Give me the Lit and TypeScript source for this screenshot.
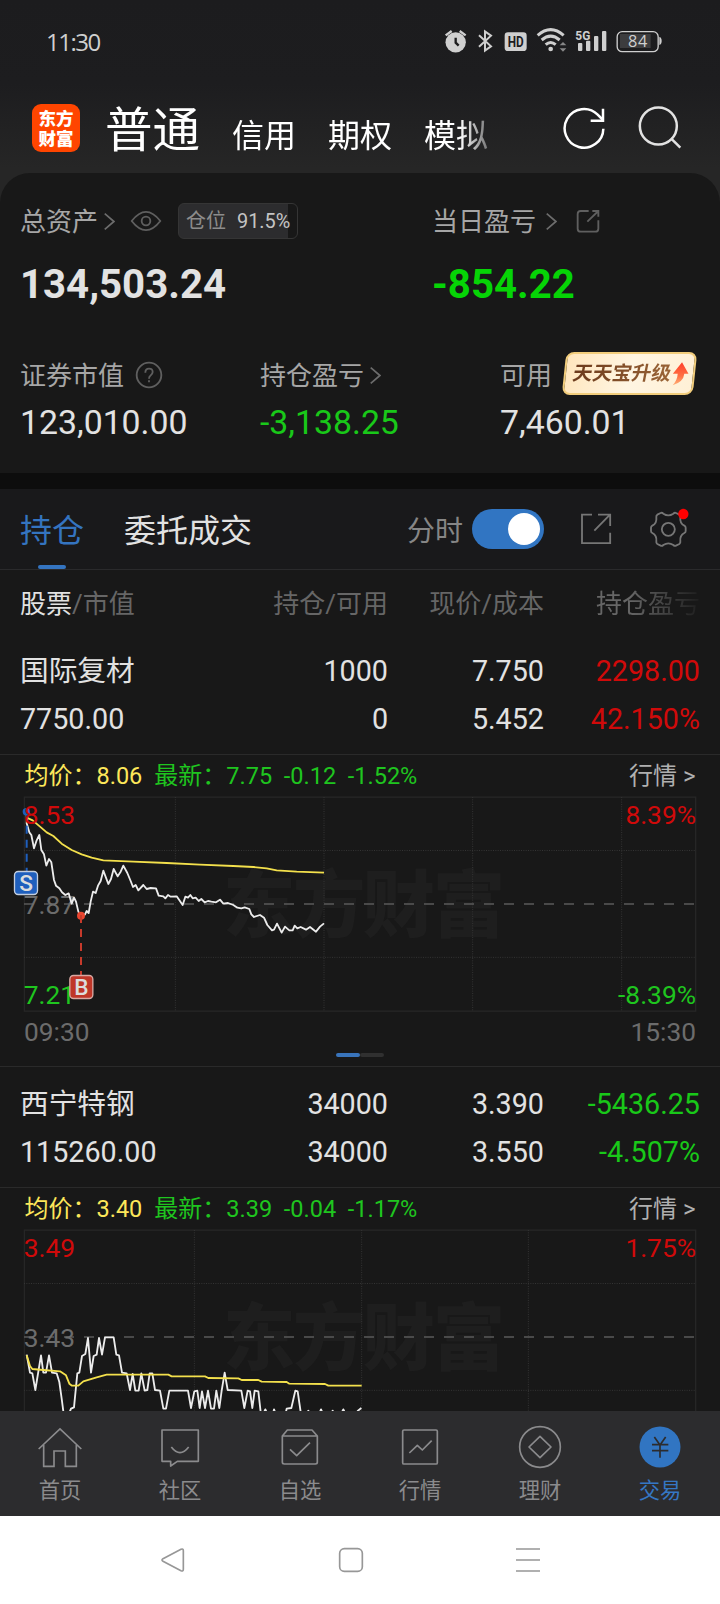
import { LitElement, html, svg, css } from "lit";
import { customElement, property } from "lit/decorators.js";

type Tone = "up" | "down";

interface ChartData {
  avg: string;
  last: string;
  high: string;
  mid: string;
  low?: string;
  pctHigh: string;
  pctLow?: string;
  columns: number[];
  price: string;
  average: string;
  trades: boolean;
}

interface Holding {
  name: string;
  value: string;
  held: string;
  available: string;
  price: string;
  cost: string;
  profit: string;
  ratio: string;
  tone: Tone;
  chart: ChartData;
}

const HOLDINGS: Holding[] = [
  {
    name: "国际复材",
    value: "7750.00",
    held: "1000",
    available: "0",
    price: "7.750",
    cost: "5.452",
    profit: "2298.00",
    ratio: "42.150%",
    tone: "up",
    chart: {
      avg: "8.06",
      last: "7.75  -0.12  -1.52%",
      high: "8.53",
      mid: "7.87",
      low: "7.21",
      pctHigh: "8.39%",
      pctLow: "-8.39%",
      columns: [526, 972, 1418, 1865],
      price:
        "80,170 80,205 88,232 94,240 102,280 110,256 118,240 124,285 132,298 139,332 147,312 154,322 162,375 168,392 178,400 186,412 196,420 206,415 215,446 222,428 228,440 235,470 243,485 255,478 260,468 266,474 272,440 279,410 287,414 294,392 302,378 310,347 325,387 333,372 341,342 353,364 362,350 370,332 382,354 392,378 399,396 407,390 415,406 430,390 440,402 452,399 468,400 476,422 490,424 496,430 504,420 512,425 530,424 548,450 556,425 564,428 571,420 578,430 587,428 596,438 604,432 614,442 624,438 634,440 648,442 660,434 670,446 684,444 700,450 712,458 724,460 734,457 748,462 754,478 762,486 780,480 792,488 802,510 816,526 822,524 831,506 845,533 855,515 868,526 878,526 884,512 892,520 902,516 918,524 930,516 948,530 960,515 972,505",
      average:
        "80,188 98,196 120,215 140,232 160,243 185,266 215,285 245,298 275,308 310,316 400,320 500,324 600,329 700,333 760,336 800,340 830,346 890,350 972,353",
      trades: true,
    },
  },
  {
    name: "西宁特钢",
    value: "115260.00",
    held: "34000",
    available: "34000",
    price: "3.390",
    cost: "3.550",
    profit: "-5436.25",
    ratio: "-4.507%",
    tone: "down",
    chart: {
      avg: "3.40",
      last: "3.39  -0.04  -1.17%",
      high: "3.49",
      mid: "3.43",
      pctHigh: "1.75%",
      columns: [583, 1085, 1585],
      price:
        "80,500 90,554 97,556 106,606 123,502 130,554 138,554 147,502 156,554 170,556 178,582 185,632 190,670 205,682 213,662 222,658 232,556 238,554 246,504 256,498 264,450 273,554 281,504 290,500 297,450 306,500 315,448 341,448 349,500 357,502 366,554 380,556 390,606 398,558 406,608 416,608 424,556 434,608 442,606 449,556 457,556 465,606 480,608 490,662 498,662 508,608 564,608 573,660 583,610 592,608 599,660 606,610 615,660 624,608 633,662 642,662 649,608 658,660 665,608 674,554 683,606 724,608 733,660 743,608 750,610 757,660 764,608 775,610 782,672 788,682 796,664 804,682 818,682 822,664 829,682 856,680 860,662 874,660 886,608 893,610 902,672 915,684 925,668 935,684 955,684 963,664 972,684 990,684 998,668 1008,684 1020,684 1030,664 1040,684 1062,684 1074,668 1084,660",
      average:
        "80,502 90,534 97,543 130,546 180,550 198,562 208,587 216,593 235,593 250,580 290,568 320,560 505,560 515,565 615,565 625,570 715,571 725,576 775,576 785,581 860,582 868,587 975,588 985,593 1085,593",
      trades: false,
    },
  },
];

const chevron = html`<svg class="chev" viewBox="0 0 32 50" width="11" height="17">
  <path d="M2 2 L29 25 L2 48" fill="none" stroke="#6c6c6c" stroke-width="5" />
</svg>`;

@customElement("minute-chart")
export class MinuteChart extends LitElement {
  @property({ attribute: false }) data!: ChartData;

  static styles = css`
    :host {
      display: block;
    }
    .legend {
      display: flex;
      height: 41px;
      padding: 0 24.500px 0 24.500px;
      line-height: 42px;
      font-size: 24px;
      white-space: pre;
    }
    .num {
      font-size: 23.500px;
    }
    .avg {
      color: #fde75a;
      margin-right: 12px;
    }
    .last {
      color: #1fc51f;
      flex: 1;
    }
    .more {
      color: #b0b0b0;
    }
    svg {
      display: block;
      overflow: visible;
    }
    text {
      font-family: Roboto, "Noto Sans CJK SC", sans-serif;
      font-size: 79px;
    }
    .mark {
      font-family: "Noto Sans CJK SC", sans-serif;
      font-size: 217px;
      font-weight: 900;
      fill: #1e1e1e;
    }
    .tag {
      font-size: 68px;
      font-weight: 500;
      fill: #dcdcdc;
      text-anchor: middle;
    }
    .end {
      text-anchor: end;
    }
    .high {
      fill: #d00a0a;
    }
    .mid {
      fill: #6c6c6c;
    }
    .low {
      fill: #1fc51f;
    }
  `;

  render() {
    const d = this.data;
    return html`
      <div class="legend"><span class="avg">均价：<span class="num">${d.avg}</span></span><span class="last">最新：<span class="num">${d.last}</span></span><span class="more">行情 &gt;</span></div>
      <svg width="720" height="215" viewBox="0 123 2160 645">
        <text class="mark" x="1092" y="529" text-anchor="middle" textLength="846">东方财富</text>
        <rect x="73" y="126.500" width="2014" height="642" fill="none" stroke="#262626" stroke-width="4" />
        <g stroke="#343434" stroke-width="3" stroke-dasharray="3 4">
          <path d="M72 286.500H2087M72 607H2087" />
          ${d.columns.map((x) => svg`<path d="M${x} 126V768" />`)}
        </g>
        <path d="M72 447H2087" stroke="#5a5a5a" stroke-width="5" stroke-dasharray="30 30" />
        <text class="mid" x="71" y="476">${d.mid}</text>
        ${d.low
          ? svg`<text class="low" x="71" y="746">${d.low}</text>
            <text class="low end" x="2088" y="746">${d.pctLow}</text>`
          : null}
        <polyline points=${d.price} fill="none" stroke="#ececec" stroke-width="5.500" stroke-linejoin="round" />
        <polyline points=${d.average} fill="none" stroke="#f3e04c" stroke-width="5.500" stroke-linejoin="round" />
        ${d.trades
          ? svg`
            <circle cx="79" cy="170" r="11" fill="#1f5fbd" />
            <path d="M80 170V348" stroke="#1f5fbd" stroke-width="6" stroke-dasharray="24 18" />
            <rect x="43.500" y="349.500" width="69" height="69" rx="11" fill="#1f5fbd" stroke="#c4cede" stroke-width="4" />
            <text class="tag" x="78" y="408">S</text>
            <circle cx="243" cy="482" r="12" fill="#e8452f" />
            <path d="M243 480V660" stroke="#c73a2b" stroke-width="6" stroke-dasharray="24 18" />
            <rect x="209.500" y="661.500" width="69" height="69" rx="11" fill="#bf3628" stroke="#d8a8a2" stroke-width="4" />
            <text class="tag" x="244" y="720">B</text>`
          : null}
        <text class="high" x="71" y="207">${d.high}</text>
        <text class="high end" x="2088" y="207">${d.pctHigh}</text>
      </svg>
    `;
  }
}

@customElement("app-root")
export class AppRoot extends LitElement {
  static styles = css`
    :host {
      display: flex;
      flex-direction: column;
      width: 720px;
      height: 1604px;
      overflow: hidden;
      background: #181818;
      color: #e2e2e2;
      font-family: Roboto, "Noto Sans CJK SC", sans-serif;
    }
    * {
      box-sizing: border-box;
    }
    svg {
      display: block;
      flex: none;
    }
    .head {
      flex: none;
      background: linear-gradient(#1c1c1e 0, #1d1d1f 84px, #262626 168px);
    }
    .status {
      display: flex;
      align-items: center;
      height: 83px;
      padding: 0 57px 0 46px;
      color: #cfcfcf;
    }
    .clock {
      flex: 1;
      padding-bottom: 1px;
      font-family: "Open Sans", Roboto, sans-serif;
      font-size: 24px;
      font-weight: 500;
      letter-spacing: -1.500px;
    }
    .nav {
      display: flex;
      align-items: center;
      height: 90px;
      padding: 0 35px 0 32px;
    }
    .logo {
      display: grid;
      place-content: center;
      width: 48px;
      height: 48px;
      border-radius: 9px;
      background: #ff4500;
      color: #fff;
      font: 900 17.500px/20px "Noto Sans CJK SC", sans-serif;
      text-align: center;
    }
    .accounts {
      display: flex;
      align-items: baseline;
      gap: 32px;
      width: 410px;
      height: 90px;
      margin-left: 25px;
      padding-top: 3px;
      color: #fff;
      font-size: 32px;
      line-height: 90px;
      white-space: nowrap;
      -webkit-mask-image: linear-gradient(90deg, #000 355px, transparent 400px);
      mask-image: linear-gradient(90deg, #000 355px, transparent 400px);
    }
    .current {
      font-size: 47.500px;
    }
    .refresh {
      margin-left: 48px;
    }
    .search {
      margin-left: 33px;
    }
    .corner {
      flex: none;
      background: #262626;
    }
    .summary {
      height: 300px;
      padding: 24px 0 0 20px;
      border-radius: 30px 30px 0 0;
      background: #181818;
    }
    .totals {
      display: grid;
      grid-template-columns: 412px 1fr;
    }
    .parts {
      display: grid;
      grid-template-columns: 240px 240px 1fr;
      margin-top: 42px;
    }
    .label {
      display: flex;
      align-items: center;
      height: 48px;
      color: #a6a6a6;
      font-size: 26px;
      line-height: 30px;
      white-space: nowrap;
    }
    .caption {
      padding-top: 2px;
    }
    .chev {
      margin-left: 6px;
    }
    .wide .chev {
      margin-left: 10px;
    }
    .total {
      height: 48px;
      margin-top: 16px;
      font-size: 40.200px;
      font-weight: 700;
      line-height: 48px;
    }
    .amount {
      height: 46px;
      font-size: 33.800px;
      line-height: 48px;
    }
    .down {
      color: #19c819;
    }
    .up {
      color: #d00a0a;
    }
    .bright {
      color: #06d406;
    }
    .eye {
      margin-left: 15px;
    }
    .share {
      margin-left: 19px;
    }
    .help {
      margin-left: 11px;
    }
    .position {
      display: flex;
      align-items: center;
      gap: 11px;
      width: 120px;
      height: 36px;
      margin-left: 16px;
      padding-left: 7px;
      border: 1px solid #353535;
      border-radius: 6px;
      background: linear-gradient(90deg, #2c2c2e 92.500%, transparent 92.500%);
      color: #8c8c8c;
      font-size: 20px;
    }
    .ratio {
      padding-top: 1px;
      color: #c4c4c4;
      font-size: 19.900px;
    }
    .promo {
      display: flex;
      align-items: center;
      width: 131px;
      height: 43px;
      margin: 0 0 3px 12px;
      padding-left: 7px;
      border: 2px solid #f2cd7c;
      border-radius: 8px;
      background: linear-gradient(100deg, #ffe6bd, #fff5e2 50%, #fff0d6);
      transform: skewX(-6deg);
    }
    .promotext {
      background: linear-gradient(90deg, #6b3a1c, #9a6436);
      -webkit-background-clip: text;
      background-clip: text;
      color: transparent;
      font-size: 19.600px;
      font-weight: 700;
      transform: skewX(-5deg);
    }
    .gap {
      flex: none;
      height: 16px;
      background: #0d0d0d;
    }
    .tabs {
      display: flex;
      flex: none;
      align-items: center;
      height: 81px;
      padding-left: 20px;
      border-bottom: 1px solid #2a2a2c;
      background: #19191b;
      font-size: 32px;
    }
    .tab {
      height: 80px;
      line-height: 84px;
      margin-right: 40px;
    }
    .active {
      display: flex;
      flex-direction: column;
      align-items: center;
      color: #3474c0;
    }
    .active::after {
      content: "";
      flex: none;
      width: 28px;
      height: 4px;
      margin-top: -8px;
      border-radius: 2px;
      background: #3474c0;
    }
    .mode {
      margin-left: 115px;
      color: #868686;
      font-size: 28px;
    }
    .switch {
      display: flex;
      justify-content: flex-end;
      width: 72px;
      height: 40px;
      margin-left: 9px;
      padding: 4px;
      border-radius: 20px;
      background: #3175c2;
    }
    .knob {
      width: 32px;
      height: 32px;
      border-radius: 50%;
      background: #fff;
    }
    .export {
      margin-left: 36px;
    }
    .gear {
      margin-left: 37px;
    }
    .columns,
    .holding {
      display: grid;
      grid-template-columns: 268px 100px 156px 156px;
      padding-left: 20px;
      text-align: right;
    }
    .columns {
      flex: none;
      height: 64px;
      color: #666;
      font-size: 26px;
      line-height: 68px;
    }
    .first {
      text-align: left;
    }
    .second {
      margin-left: -60px;
    }
    .strong {
      color: #e2e2e2;
    }
    .fade {
      -webkit-mask-image: linear-gradient(90deg, #000 55%, transparent 104%);
      mask-image: linear-gradient(90deg, #000 55%, transparent 104%);
    }
    .list {
      flex: 1;
      min-height: 0;
      overflow: hidden;
    }
    .holding {
      height: 121px;
      padding-top: 13px;
      border-bottom: 1px solid #2a2a2a;
      font-size: 28.700px;
      line-height: 48px;
      grid-auto-rows: 48px;
    }
    .axis {
      display: flex;
      justify-content: space-between;
      height: 40px;
      padding: 0 24px;
      color: #6c6c6c;
      font-size: 26.300px;
      line-height: 42px;
    }
    .pager {
      display: flex;
      justify-content: center;
      height: 16px;
      padding-top: 2px;
      border-bottom: 1px solid #2a2a2a;
    }
    .dot {
      width: 24px;
      height: 4px;
      border-radius: 2px;
      background: #303030;
    }
    .on {
      background: #3974bb;
    }
    .bar {
      display: grid;
      flex: none;
      grid-template-columns: repeat(6, 120px);
      height: 105px;
      padding-top: 12px;
      background: #2c2c2e;
      color: #8b8b8d;
      font-size: 21.300px;
      line-height: 40px;
      text-align: center;
    }
    .bar svg {
      margin: 0 auto;
    }
    .chosen {
      color: #3577c4;
    }
    .system {
      display: flex;
      flex: none;
      align-items: center;
      gap: 151.500px;
      height: 88px;
      padding-left: 160px;
      background: #fff;
    }
  `;

  private statusIcons() {
    return html`<svg width="220" height="28" viewBox="250 84 660 84">
      <g fill="#cfcfcf">
        <circle cx="288" cy="127" r="30.500" />
        <path d="M258 106L276 93M318 106L300 93" stroke="#cfcfcf" stroke-width="7" />
        <path d="M288 113V128L297 137" fill="none" stroke="#1c1c1e" stroke-width="7" />
        <path d="M358 106L394 139L376 152V94L394 107L358 140" fill="none" stroke="#cfcfcf" stroke-width="6" />
        <rect x="435" y="97" width="66" height="56" rx="10" />
        <path d="M534 106Q573 72 612 106M546 120Q573 97 600 120M558 134Q573 121 588 134" fill="none" stroke="#cfcfcf" stroke-width="9" />
        <circle cx="573" cy="147" r="7" />
        <path d="M600 136L610 126L620 136ZM600 145L610 155L620 145Z" opacity=".6" />
        <rect x="655" y="129" width="13" height="24" rx="3" />
        <rect x="679" y="122" width="13" height="31" rx="3" />
        <rect x="703" y="108" width="13" height="45" rx="3" />
        <rect x="727" y="93" width="13" height="60" rx="3" />
        <rect x="772.500" y="95" width="123" height="60" rx="15" fill="none" stroke="#cfcfcf" stroke-width="4" />
        <rect x="781" y="102" width="92" height="42" fill="#3c3c3e" />
        <path d="M899 111V135Q906 134 906 123Q906 112 899 111Z" />
      </g>
      <text x="468" y="141" text-anchor="middle" font-family="Roboto" font-size="45" font-weight="700" fill="#1c1c1e" textLength="48" lengthAdjust="spacingAndGlyphs">HD</text>
      <text x="647" y="119" font-family="Roboto" font-size="41" font-weight="700" fill="#cfcfcf" textLength="45" lengthAdjust="spacingAndGlyphs">5G</text>
      <text x="834" y="142" text-anchor="middle" font-family="Open Sans" font-size="49" font-weight="500" fill="#cfcfcf" textLength="58">84</text>
    </svg>`;
  }

  private row(h: Holding) {
    return html`<div class="holding">
      <span class="first">${h.name}</span><span>${h.held}</span><span>${h.price}</span><span class=${h.tone}>${h.profit}</span>
      <span class="first">${h.value}</span><span>${h.available}</span><span>${h.cost}</span><span class=${h.tone}>${h.ratio}</span>
    </div>`;
  }

  private tabItem(label: string, glyph: unknown, chosen = false) {
    return html`<div class=${chosen ? "chosen" : ""}>
      <svg width="48" height="48" viewBox="-72 -72 144 144" fill="none" stroke="#8b8b8d" stroke-width="5" stroke-linejoin="round">${glyph}</svg>
      <div>${label}</div>
    </div>`;
  }

  render() {
    return html`
      <header class="head">
        <div class="status"><span class="clock">11:30</span>${this.statusIcons()}</div>
        <div class="nav">
          <div class="logo"><span>东方</span><span>财富</span></div>
          <div class="accounts"><span class="current">普通</span><span>信用</span><span>期权</span><span>模拟</span></div>
          <svg class="refresh" width="42" height="44" viewBox="607 319 126 132" fill="none" stroke="#fff" stroke-width="7.500">
            <path d="M728 387A58 58 0 1 1 711 345L727 361" />
            <path d="M727 327V363H690" />
          </svg>
          <svg class="search" width="44" height="44" viewBox="833 318 132 132" fill="none" stroke="#e2e2e2" stroke-width="7.500">
            <circle cx="894" cy="378" r="55.500" />
            <path d="M932 415L960 443" />
          </svg>
        </div>
      </header>

      <div class="corner">
        <section class="summary">
          <div class="totals">
            <div>
              <div class="label">
                <span class="caption">总资产</span>${chevron}
                <svg class="eye" width="32" height="22" viewBox="390 102 96 66" fill="none" stroke="#5f5f5f" stroke-width="5.500">
                  <path d="M395 135Q438 80 481 135Q438 190 395 135Z" stroke-linejoin="round" />
                  <circle cx="438" cy="135" r="13" />
                </svg>
                <div class="position"><span>仓位</span><span class="ratio">91.5%</span></div>
              </div>
              <div class="total">134,503.24</div>
            </div>
            <div>
              <div class="label wide">
                <span class="caption">当日盈亏</span>${chevron}
                <svg class="share" width="24" height="24" viewBox="648 101 72 72" fill="none" stroke="#5f5f5f" stroke-width="5.500">
                  <path d="M686 107H662Q653 107 653 116V160Q653 169 662 169H706Q715 169 715 160V135M697 107H715V124M715 107L682 139" />
                </svg>
              </div>
              <div class="total bright">-854.22</div>
            </div>
          </div>
          <div class="parts">
            <div>
              <div class="label">
                <span class="caption">证券市值</span>
                <svg class="help" width="28" height="28" viewBox="405 555 84 84" fill="none" stroke="#5f5f5f" stroke-width="5.500">
                  <circle cx="447" cy="597" r="37" />
                  <path d="M436 590Q436 578 447 578Q458 578 458 588Q458 593 452 598Q447 602 447 608M447 613V619" />
                </svg>
              </div>
              <div class="amount">123,010.00</div>
            </div>
            <div>
              <div class="label"><span class="caption">持仓盈亏</span>${chevron}</div>
              <div class="amount down">-3,138.25</div>
            </div>
            <div>
              <div class="label">
                <span class="caption">可用</span>
                <div class="promo">
                  <span class="promotext">天天宝升级</span>
                  <svg width="18" height="24" viewBox="0 0 51 69">
                    <defs>
                      <linearGradient id="arrow" x1="0" y1="0" x2="0" y2="1">
                        <stop offset="0" stop-color="#ff3f2a" />
                        <stop offset=".6" stop-color="#ff7043" />
                        <stop offset="1" stop-color="#ffb27a" />
                      </linearGradient>
                    </defs>
                    <path d="M28 1L50 34H38Q38 58 8 67Q20 52 19 34H5Z" fill="url(#arrow)" />
                  </svg>
                </div>
              </div>
              <div class="amount">7,460.01</div>
            </div>
          </div>
        </section>
      </div>
      <div class="gap"></div>

      <nav class="tabs">
        <span class="tab active">持仓</span>
        <span class="tab">委托成交</span>
        <span class="mode">分时</span>
        <span class="switch"><span class="knob"></span></span>
        <svg class="export" width="32" height="32" viewBox="660 129 96 96" fill="none" stroke="#767676" stroke-width="5.500">
          <path d="M696 134H666V219.500H750.500V188M714 134H750.500V168M750 134L703 182" />
        </svg>
        <svg class="gear" width="42" height="42" viewBox="866 114 126 126" fill="none" stroke="#767676" stroke-width="5.500">
          <path d="M901 129Q905 127 909 131Q924 141 939 131Q943 127 947 129L957 134Q961 137 960 142Q958 160 972 167Q976 169 976 173V183Q976 187 972 189Q958 196 960 214Q961 219 957 222L947 227Q943 229 939 225Q924 215 909 225Q905 229 901 227L891 222Q887 219 888 214Q890 196 876 189Q872 187 872 183V173Q872 169 876 167Q890 160 888 142Q887 137 891 134Z" stroke-linejoin="round" />
          <circle cx="924" cy="178" r="19.500" />
          <circle cx="969" cy="132" r="15.500" fill="#ff0000" stroke="none" />
        </svg>
      </nav>

      <div class="columns">
        <span class="first"><span class="strong">股票</span>/市值</span>
        <span class="second">持仓/可用</span>
        <span>现价/成本</span>
        <span class="fade">持仓盈亏</span>
      </div>

      <main class="list">
        ${this.row(HOLDINGS[0])}
        <minute-chart .data=${HOLDINGS[0].chart}></minute-chart>
        <div class="axis"><span>09:30</span><span>15:30</span></div>
        <div class="pager"><span class="dot on"></span><span class="dot"></span></div>
        ${this.row(HOLDINGS[1])}
        <minute-chart .data=${HOLDINGS[1].chart}></minute-chart>
      </main>

      <nav class="bar">
        ${this.tabItem("首页", svg`<path d="M-64 6L0 -54L64 6M-49 -6V58H-18V12H16V58H49V-6" stroke-linejoin="miter" />`)}
        ${this.tabItem("社区", svg`<path d="M-54 -51H55V43H-8L-28 57V43H-54ZM-26 0Q0 34 26 0" />`)}
        ${this.tabItem("自选", svg`<path d="M-53 -33L-38 -51H36L52 -33V46Q52 51 46 51H-47Q-53 51 -53 46ZM-53 -33H52M-30 7L-10 26L30 -13" />`)}
        ${this.tabItem("行情", svg`<rect x="-52" y="-51" width="104" height="102" rx="4" /><path d="M-32 18L-8 -5L7 9L35 -19" />`)}
        ${this.tabItem("理财", svg`<circle r="61" /><path d="M0 -32L33 0L0 32L-33 0Z" />`)}
        ${this.tabItem("交易", svg`<circle r="61.500" fill="#3175c2" stroke="none" /><path d="M-17 -30L0 -6L17 -30M0 -6V32M-24 -7H25M-24 11H25" stroke="#2c2c2e" />`, true)}
      </nav>

      <footer class="system">
        <svg width="26" height="26" viewBox="-39 -39 78 78" fill="none" stroke="#979797" stroke-width="5">
          <path d="M-30 -4L24 -32Q31 -35 31 -28V28Q31 35 24 32L-30 4Q-36 0 -30 -4Z" />
        </svg>
        <svg width="26" height="26" viewBox="-39 -39 78 78" fill="none" stroke="#979797" stroke-width="5">
          <rect x="-34" y="-34" width="68" height="68" rx="14" />
        </svg>
        <svg width="26" height="26" viewBox="-39 -39 78 78" fill="none" stroke="#979797" stroke-width="5">
          <path d="M-36 -33H36M-36 0H36M-36 33H36" />
        </svg>
      </footer>
    `;
  }
}
